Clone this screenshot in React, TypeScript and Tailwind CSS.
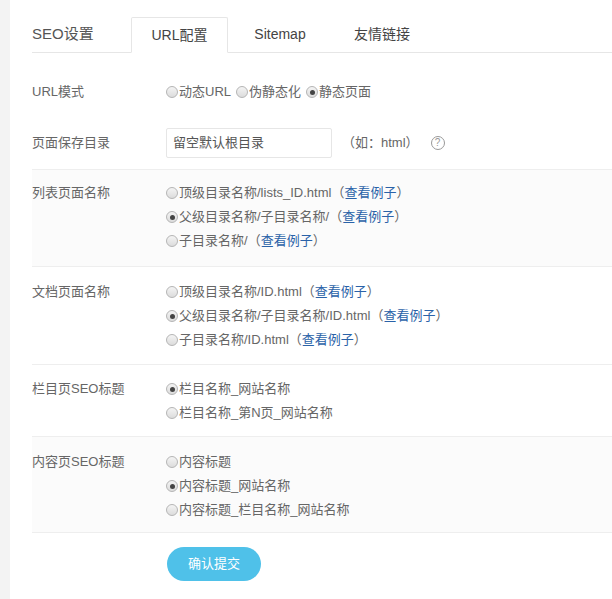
import React from "react";

const Radio = ({ on }: { on?: boolean }) => (
  <span className="inline-flex items-center justify-center w-[12px] h-[12px] rounded-full border border-[#b5b5b5] bg-gradient-to-b from-[#f4f4f4] to-[#dcdcdc] mr-[1px] align-middle">
    {on && <span className="w-[5px] h-[5px] rounded-full bg-[#444]" />}
  </span>
);

const Opt = ({ on, text, link }: { on?: boolean; text: string; link?: boolean }) => (
  <div className="flex items-center h-[24px]">
    <Radio on={on} />
    <span>{text}</span>
    {link && (
      <span>
        （<span className="text-[#2a62a8]">查看例子</span>）
      </span>
    )}
  </div>
);

const Row = ({ label, gray, children, cls }: { label: string; gray?: boolean; children: React.ReactNode; cls: string }) => (
  <div className={`flex border-b border-[#eeeeee] ${gray ? "bg-[#fbfbfb]" : ""} ${cls}`}>
    <div className="w-[134px] h-[24px] flex items-center">{label}</div>
    <div className="flex-1">{children}</div>
  </div>
);

export default function App() {
  return (
    <div className="w-[612px] h-[599px] bg-[#f3f3f3] flex" style={{ fontFamily: '"Liberation Sans","Noto Sans CJK SC",sans-serif' }}>
      <div className="ml-[10px] flex-1 bg-white pl-[22px] text-[13px] text-[#666]">
        <div className="flex items-end h-[53px] border-b border-[#e6e6e6]">
          <div className="w-[99px] h-[36px] flex items-center text-[15px] text-[#555]">SEO设置</div>
          <div className="w-[97px] h-[36px] flex items-center justify-center border border-[#e6e6e6] border-b-white -mb-px bg-white rounded-t-[2px] text-[14px] text-[#444]">URL配置</div>
          <div className="w-[104px] h-[36px] flex items-center justify-center text-[14px] text-[#444]">Sitemap</div>
          <div className="w-[100px] h-[36px] flex items-center justify-center text-[14px] text-[#444]">友情链接</div>
        </div>
        <div className="flex pt-[27px] h-[62px]">
          <div className="w-[134px] h-[24px] flex items-center">URL模式</div>
          <div className="flex items-center h-[24px] gap-[5px]">
            <span className="flex items-center"><Radio />动态URL</span>
            <span className="flex items-center"><Radio />伪静态化</span>
            <span className="flex items-center"><Radio on />静态页面</span>
          </div>
        </div>
        <div className="flex pt-[13px] h-[55px] border-b border-[#eeeeee]">
          <div className="w-[134px] h-[29px] flex items-center">页面保存目录</div>
          <div className="flex items-center h-[29px]">
            <div className="w-[166px] h-[30px] border border-[#e6e6e6] rounded-[2px] flex items-center px-[6px] text-[#555]">留空默认根目录</div>
            <span className="ml-[10px]">（如：html）</span>
            <span className="ml-[12px] w-[14px] h-[14px] rounded-full border border-[#999] text-[10px] flex items-center justify-center text-[#999]">?</span>
          </div>
        </div>
        <Row label="列表页面名称" gray cls="pt-[11px] h-[97px]">
          <Opt text="顶级目录名称/lists_ID.html" link />
          <Opt on text="父级目录名称/子目录名称/" link />
          <Opt text="子目录名称/" link />
        </Row>
        <Row label="文档页面名称" cls="pt-[13px] h-[98px]">
          <Opt text="顶级目录名称/ID.html" link />
          <Opt on text="父级目录名称/子目录名称/ID.html" link />
          <Opt text="子目录名称/ID.html" link />
        </Row>
        <Row label="栏目页SEO标题" cls="pt-[12px] h-[72px]">
          <Opt on text="栏目名称_网站名称" />
          <Opt text="栏目名称_第N页_网站名称" />
        </Row>
        <Row label="内容页SEO标题" gray cls="pt-[13px] h-[96px]">
          <Opt text="内容标题" />
          <Opt on text="内容标题_网站名称" />
          <Opt text="内容标题_栏目名称_网站名称" />
        </Row>
        <div className="pl-[135px] pt-[14px]">
          <button className="w-[94px] h-[34px] rounded-full bg-[#4fc1e9] text-white text-[13px]">确认提交</button>
        </div>
      </div>
    </div>
  );
}
